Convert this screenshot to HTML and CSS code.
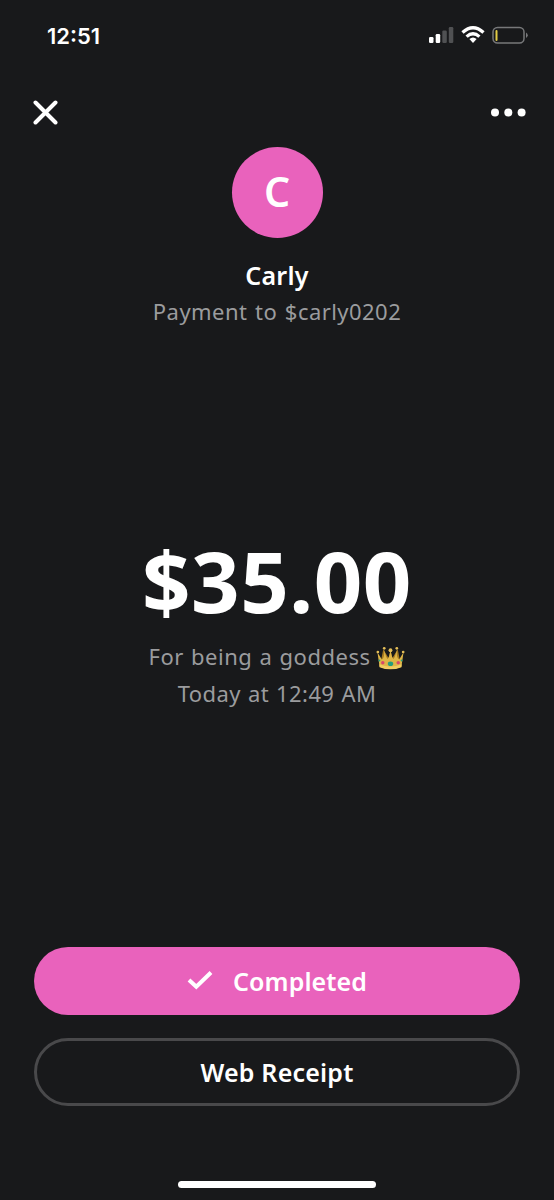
FILE: index.html
```html
<!DOCTYPE html>
<html lang="en">
<head>
<meta charset="utf-8">
<title>Payment</title>
<link rel="stylesheet" href="styles.css">
</head>
<body>
<main class="screen">
  <div class="status">
    <span class="clock">12:51</span>
    <svg class="indicators" width="100" height="20" viewBox="0 0 100 20">
      <g fill="#fff"><rect x="1" y="11" width="4.5" height="6" rx="1.2"/><rect x="7.700" y="8" width="4.5" height="9" rx="1.2"/></g>
      <g fill="#505153"><rect x="14.300" y="4.500" width="4.500" height="12.500" rx="1.200"/><rect x="20.800" y="1" width="4.500" height="16" rx="1.200"/></g>
      <g fill="none" stroke="#fff" stroke-width="3.300"><path d="M34.500 6.500Q45-3 55.500 6.500"/><path d="M38.600 10.600Q45 4.800 51.400 10.600"/></g>
      <path d="M41.400 13Q45 10 48.600 13L45 17Z" fill="#fff"/>
      <rect x="65" y="1.500" width="31" height="15.500" rx="4.500" fill="none" stroke="#77787a" stroke-width="1.500"/>
      <rect x="67.500" y="4" width="2" height="11" rx="1" fill="#e2cc45"/>
      <path d="M98 6.500Q101.500 9 98 12Z" fill="#77787a"/>
    </svg>
  </div>
  <nav class="nav">
    <svg width="26" height="26" viewBox="0 0 26 26" stroke="#fff" stroke-width="4" stroke-linecap="round"><path d="M3.500 3.500L23.500 23.500M23.500 3.500L3.500 23.500"/></svg>
    <svg width="36" height="10" viewBox="0 0 36 10" fill="#fff"><circle cx="5" cy="5.500" r="4"/><circle cx="18.300" cy="5.500" r="4"/><circle cx="31.600" cy="5.500" r="4"/></svg>
  </nav>
  <section class="profile">
    <div class="avatar">C</div>
    <h1 class="name">Carly</h1>
    <p class="detail handle">Payment to $carly0202</p>
  </section>
  <section class="payment">
    <div class="amount">$35.00</div>
    <p class="detail note"><span>For being a goddess</span>
      <svg class="crown" width="30" height="26" viewBox="0 0 30 26">
        <path d="M5 17L7.500 4L13 13L15 5L17 13L22.500 4L25 17Z" fill="#a77a20"/>
        <path d="M1.500 7L6 14.500Q9 13 8.500 4Q10 12 12 14Q14 12 15 4Q16 12 18 14Q20 12 21.500 4Q21 13 24 14.500L28.500 7L26.300 22Q15 27 3.700 22Z" fill="#dfb546"/>
        <path d="M3.500 19.500Q15 24 26.500 19.500L26.300 22.500Q15 27 3.700 22.500Z" fill="#f0cd62"/>
        <g fill="#e4be58"><circle cx="1.900" cy="6.800" r="1.400"/><circle cx="8.500" cy="3" r="1.400"/><circle cx="15" cy="5" r="2"/><circle cx="21.500" cy="3" r="1.400"/><circle cx="28.100" cy="6.800" r="1.400"/></g>
        <ellipse cx="15" cy="19" rx="2.800" ry="2.400" fill="#259f7c"/>
        <circle cx="7" cy="18" r="1.800" fill="#d8476c"/><circle cx="23" cy="18" r="1.800" fill="#d8476c"/>
        <circle cx="3.500" cy="15.500" r="1" fill="#259f7c"/><circle cx="26.500" cy="15.500" r="1" fill="#259f7c"/>
      </svg>
    </p>
    <p class="detail time">Today at 12:49 AM</p>
  </section>
  <footer class="actions">
    <button class="button primary">
      <svg width="26" height="20" viewBox="0 0 26 20" fill="none" stroke="#fff" stroke-width="4"><path d="M2 9L9.300 15.800L24 1.500"/></svg>
      <span>Completed</span>
    </button>
    <button class="button outline"><span class="receipt">Web Receipt</span></button>
  </footer>
  <div class="home"></div>
</main>
</body>
</html>
```
FILE: styles.css
```css
* { box-sizing: border-box; }
body { margin: 0; background: #18191b; color: #fff; font-family: "Noto Sans", sans-serif; }
h1, p { margin: 0; }
svg { display: block; flex: none; }
.screen { display: flex; flex-direction: column; width: 554px; height: 1200px; }
.status { display: flex; justify-content: space-between; height: 72px; padding: 26px 26px 0 47px; }
.clock { font: 600 22px/20px Inter, sans-serif; letter-spacing: 0; }
.nav { display: flex; justify-content: space-between; align-items: center; height: 26px; margin-top: 27px; padding: 0 28px 0 32px; }
.profile { display: flex; flex-direction: column; align-items: center; height: 180px; margin-top: 22px; }
.avatar { flex: none; width: 91px; height: 91px; border-radius: 50%; background: #e962bc; font-size: 41px; font-weight: 600; line-height: 89px; text-align: center; }
.name { margin-top: 19px; font-size: 25px; font-weight: 600; line-height: 36px; letter-spacing: .3px; }
.detail { color: #9b9c9e; font-size: 22px; line-height: 37px; white-space: nowrap; }
.handle { letter-spacing: .45px; word-spacing: 1.5px; }
.payment { display: flex; flex-direction: column; align-items: center; margin-top: 205px; }
.amount { font-size: 85px; font-weight: 700; line-height: 96px; letter-spacing: .5px; }
.note { display: flex; align-items: center; gap: 6px; margin-top: 10px; letter-spacing: .5px; word-spacing: 1px; }
.crown { width: 29px; height: 26px; margin-top: 3px; }
.time { letter-spacing: .4px; word-spacing: 1px; }
.actions { display: flex; flex-direction: column; gap: 23px; margin-top: auto; padding: 0 34px; }
.button { display: flex; align-items: center; justify-content: center; height: 68px; padding: 0; border: 0; border-radius: 34px; color: #fff; font: 600 25px/30px "Noto Sans", sans-serif; }
.primary { gap: 20px; background: #e962bc; letter-spacing: .1px; }
.outline { border: 3px solid #49494b; background: transparent; letter-spacing: .2px; }
.home { align-self: center; width: 198px; height: 7px; margin: 75px 0 12px; border-radius: 4px; background: #fff; }
```
